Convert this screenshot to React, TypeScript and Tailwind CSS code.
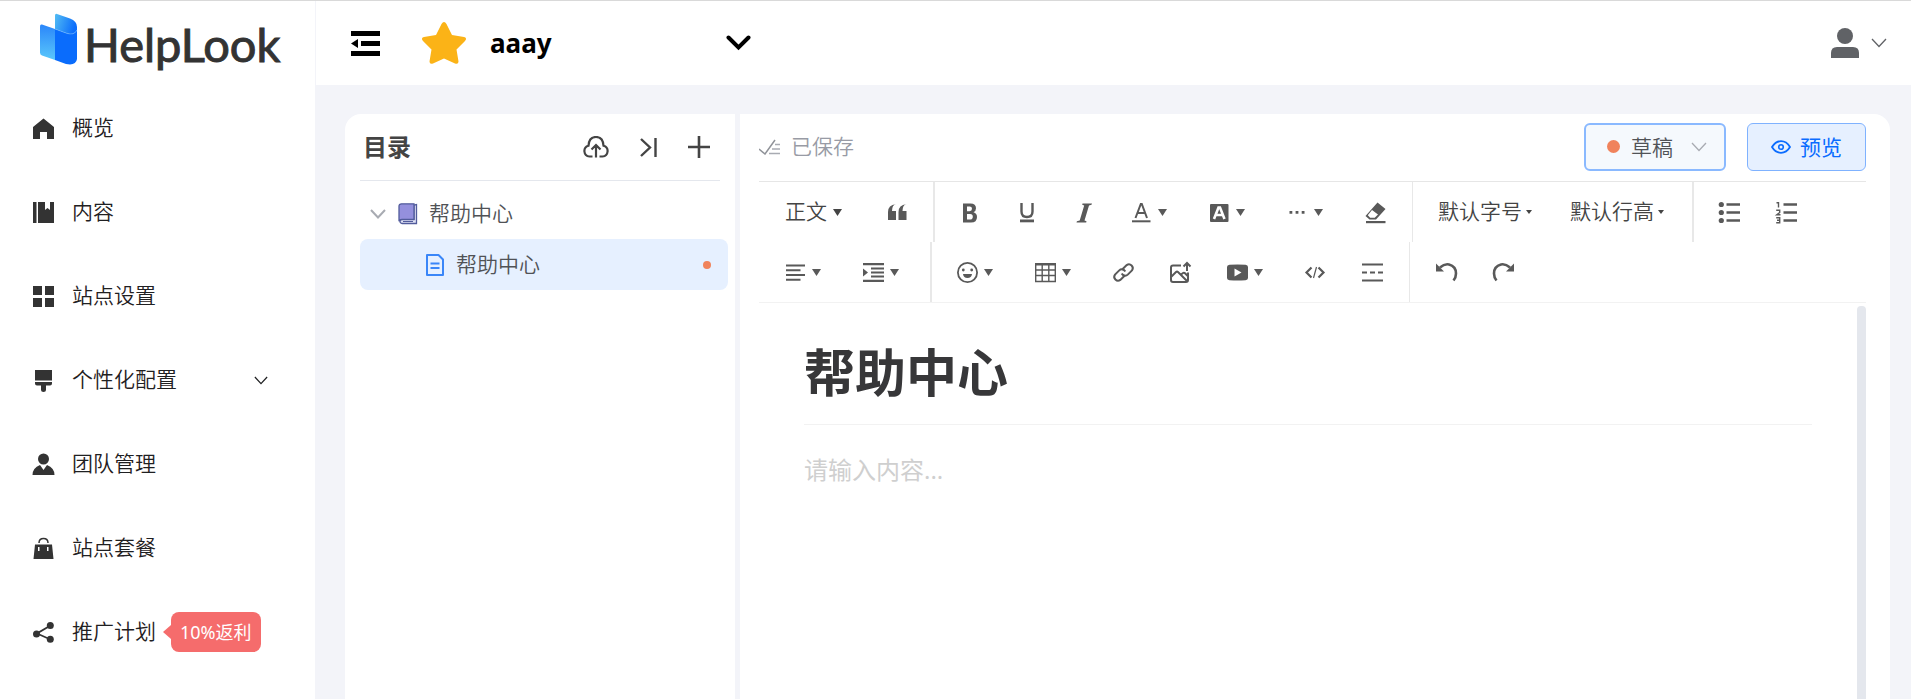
import type { ReactNode } from "react";

const cjk = "font-['Noto_Sans','Noto_Sans_CJK_SC',sans-serif]";

function Svg({ children, className = "size-[21px]", box = "0 0 21 21" }: { children: ReactNode; className?: string; box?: string }) {
  return (
    <svg viewBox={box} className={`shrink-0 ${className}`} fill="none" stroke="none" aria-hidden="true">
      {children}
    </svg>
  );
}

function Chevron({ className, width = 1 }: { className: string; width?: number }) {
  return (
    <Svg box="0 0 16 10" className={className}>
      <path d="M1 1l7 7.5L15 1" stroke="currentColor" strokeWidth={width} />
    </Svg>
  );
}

function Logo() {
  return (
    <a href="#home" className="flex h-[85px] items-center pl-10 text-[#333]">
      <Svg box="0 0 38 52" className="mb-[10px] h-[52px] w-[38px]">
        <defs>
          <linearGradient id="left" x1="0" y1="0" x2="0" y2="1">
            <stop stopColor="#2b86fa" />
            <stop offset="1" stopColor="#5ac8fb" />
          </linearGradient>
          <linearGradient id="top" x1="0" y1="0" x2="1" y2="0.3">
            <stop stopColor="#53bdf3" />
            <stop offset="1" stopColor="#0d6efb" />
          </linearGradient>
        </defs>
        <path d="M0 13.500q0-2.500 2-1.900L15 16v31L2 42.500Q0 41.800 0 39.500z" fill="url(#left)" />
        <path d="M15 16l11 4q8 3 11-3v29q-1 7-11 5L15 47z" fill="#0a6cfc" />
        <path d="M15 2.500Q15 .4 17 1l13 4.500q7 2.500 7 8.500v3q-3 6-11 3L15 16z" fill="url(#top)" />
        <path d="M15 16l11 4q8 3 11-3" stroke="#6bb5ff" strokeWidth=".6" />
      </Svg>
      <span className="pl-[6px] font-['Lato',sans-serif] text-[47px] leading-[48px] font-normal [-webkit-text-stroke:1px_#333]">HelpLook</span>
    </a>
  );
}

const navItems: { label: string; icon: ReactNode; expandable?: boolean; badge?: string }[] = [
  { label: "概览", icon: <path d="M10.500.5L21 9v12h-7v-7H7v7H0V9z" fill="currentColor" /> },
  { label: "内容", icon: <path d="M0 0h3.500v21H0zM5 0h7v8l2.500-2L17 8V0h4v21H5z" fill="currentColor" /> },
  { label: "站点设置", icon: <path d="M0 0h9v9H0zM12 0h9v9h-9zM0 12h9v9H0zM12 12h9v9h-9z" fill="currentColor" /> },
  {
    label: "个性化配置",
    icon: <path d="M2 0h17v10.500H2zM2 12h17v1.500q0 2-2 2h-4V20q0 2-2.500 2T8 20v-4.500H4q-2 0-2-2z" fill="currentColor" />,
    expandable: true,
  },
  {
    label: "团队管理",
    icon: (
      <>
        <circle cx="10.500" cy="5" r="5.500" fill="currentColor" />
        <path d="M-.5 21q0-7 7.500-10l3.500 5 3.500-5q7.500 3 7.500 10z" fill="currentColor" />
      </>
    ),
  },
  {
    label: "站点套餐",
    icon: (
      <>
        <path d="M6 5q0-4.500 4.500-4.500T15 5" stroke="currentColor" strokeWidth="1.500" />
        <path d="M2 6.500h17L20.500 21H.5zM5 9v4h1.500V9zm9 0v4h1.500V9z" fill="currentColor" fillRule="evenodd" />
      </>
    ),
  },
  {
    label: "推广计划",
    icon: (
      <>
        <path d="M17.500 3.500L4 11.500l13.500 6" stroke="currentColor" strokeWidth="1.800" />
        <circle cx="17.300" cy="3.500" r="3.500" fill="currentColor" />
        <circle cx="3.500" cy="12" r="3.500" fill="currentColor" />
        <circle cx="17.300" cy="17.300" r="3.500" fill="currentColor" />
      </>
    ),
    badge: "10%返利",
  },
];

function Sidebar() {
  return (
    <aside className="w-[315px] shrink-0 bg-white">
      <Logo />
      <nav>
        {navItems.map((item) => (
          <a key={item.label} href="#nav" className="flex h-[84px] items-center pr-[47px] pl-[33px] text-[21px] text-[#1f2022]">
            <Svg className="size-[21px] overflow-visible text-[#333]">{item.icon}</Svg>
            <span className="ml-[18px]">{item.label}</span>
            {item.expandable && <Chevron className="ml-auto h-[9px] w-[14px]" width={1.4} />}
            {item.badge && (
              <span className="ml-[7px] flex items-center font-normal text-white">
                <span className="border-y-[7px] border-r-8 border-y-transparent border-r-[#f56c6c]" />
                <span className="flex h-10 items-center rounded-lg bg-[#f56c6c] px-[9px] text-lg">{item.badge}</span>
              </span>
            )}
          </a>
        ))}
      </nav>
    </aside>
  );
}

function Header() {
  return (
    <header className="flex h-[84px] items-center border-l border-[#f3f4f9] bg-white pr-6 pl-[35px]">
      <button type="button" aria-label="收起菜单">
        <Svg box="0 0 29 25" className="h-[25px] w-[29px]">
          <path d="M0 0h29v5H0zM10 10h19v5H10zM0 20h29v5H0zM7 8v9l-7-4.500z" fill="#000" />
        </Svg>
      </button>
      <button type="button" className="ml-[42px] flex w-[329px] items-center">
        <Svg box="0 0 44 42" className="h-[42px] w-11">
          <path
            d="M19.500 2q2.500-4 5 0l5.500 11 12 2q3.500 1 1 4l-8.500 8.500 2 12q0 3-3.500 2L22 36.500 11 41.500q-3.500 1-3.500-2l2-12L1 19q-2.500-3 1-4l12-2z"
            fill="#fbb317"
          />
        </Svg>
        <span className="ml-6 text-[26px] font-bold text-black">aaay</span>
        <Svg box="0 0 25 16" className="ml-auto h-4 w-[25px]">
          <path d="M2.500 2.500l10 10 10-10" stroke="#000" strokeWidth="4" strokeLinecap="round" />
        </Svg>
      </button>
      <button type="button" aria-label="账户" className="ml-auto flex items-center gap-3 text-[#606266]">
        <Svg box="0 0 28 30" className="h-[30px] w-7">
          <circle cx="14" cy="8" r="8" fill="currentColor" />
          <path d="M0 30v-5q0-6 6-6h16q6 0 6 6v5z" fill="currentColor" />
        </Svg>
        <Chevron className="h-[10px] w-4" width={1.3} />
      </button>
    </header>
  );
}

function Catalog() {
  return (
    <section className="w-[390px] shrink-0 rounded-tl-2xl bg-white pr-[7px] pl-[15px]">
      <div className="mr-2 flex h-[67px] items-center border-b border-[#e4e7ed] pr-[10px] pl-[3px] text-[#444]">
        <h2 className="text-2xl font-bold">目录</h2>
        <div className="ml-auto flex items-center gap-[31px]">
          <button type="button" aria-label="上传">
            <Svg box="0 0 26 22" className="h-[22px] w-[26px]">
              <path
                d="M9.500 20.500H6.500a5.500 5.500 0 0 1-1-10.800Q6 1 13 1t7.500 8.700a5.500 5.500 0 0 1-1 10.800h-3M13 21.500V9.500M8.500 13.500L13 9l4.500 4.500"
                stroke="currentColor"
                strokeWidth="2.200"
              />
            </Svg>
          </button>
          <button type="button" aria-label="折叠">
            <Svg box="0 0 17 19" className="h-[19px] w-[17px]">
              <path d="M1 1l9 8.500L1 18M15.500 0v19" stroke="currentColor" strokeWidth="2.400" />
            </Svg>
          </button>
          <button type="button" aria-label="新建">
            <Svg box="0 0 22 22" className="size-[22px]">
              <path d="M11 0v22M0 11h22" stroke="currentColor" strokeWidth="2.600" />
            </Svg>
          </button>
        </div>
      </div>
      <ul className="text-[21px] text-[#505256]">
        <li className="flex h-[58px] items-center pt-2 pl-[10px]">
          <Chevron className="h-[10px] w-4 text-[#a8abb2]" width={2} />
          <Svg box="0 0 20 22" className="ml-3 h-[22px] w-5">
            <path d="M4 16.500h12V2l2.500-.5v19H4a2 2 0 0 1 0-4z" fill="#dfe1f5" stroke="#525c9c" strokeWidth="1.300" />
            <path d="M3.500.8H16v15.500H4q-2.500 0-3 2V3.300Q1 .8 3.500.8z" fill="#9490dd" stroke="#525c9c" strokeWidth="1.300" />
            <path d="M5 18.500h10" stroke="#525c9c" strokeWidth="1" />
          </Svg>
          <span className="ml-[11px]">帮助中心</span>
        </li>
        <li className="flex h-[51px] items-center rounded-lg bg-[#e6f0ff] pr-[17px] pl-[66px]">
          <Svg box="0 0 18 22" className="h-[22px] w-[18px]">
            <path d="M1 1h11.500L17 5.500V21H1zM4.500 9.500h9M4.500 14h9" stroke="#3a86f8" strokeWidth="2" strokeLinejoin="round" />
          </Svg>
          <span className="ml-3">帮助中心</span>
          <span className="ml-auto size-2 rounded-full bg-[#f0835c]" />
        </li>
      </ul>
    </section>
  );
}

function Tool({ label, caret, children }: { label: string; caret?: boolean; children: ReactNode }) {
  return (
    <button type="button" aria-label={label} className={`flex h-[60px] items-center gap-[6px] pl-[18px] ${caret ? "w-[78px]" : "w-[57px]"}`}>
      <Svg className="size-[21px] overflow-visible">{children}</Svg>
      {caret && <Caret />}
    </button>
  );
}

function Caret() {
  return (
    <Svg box="0 0 9 7" className="h-[7px] w-[9px]">
      <path d="M0 0h9L4.500 7z" fill="currentColor" />
    </Svg>
  );
}

function TextTool({ label }: { label: string }) {
  return (
    <button type="button" className="flex h-[60px] w-[132px] items-center gap-1 pl-[18px] text-[21px] whitespace-nowrap text-[#444]">
      {label}
      <Svg box="0 0 6 4" className="h-1 w-[6px]">
        <path d="M0 0h6L3 4z" fill="currentColor" />
      </Svg>
    </button>
  );
}

function Toolbar() {
  return (
    <div className="flex flex-wrap border-y border-t-[#e6e6e6] border-b-[#f2f2f2] text-[#595959]">
      <div className="flex border-r-2 border-[#e8e8e8] pr-[7px] pl-2">
        <button type="button" className="flex h-[60px] w-[102px] items-center gap-[6px] pl-[18px] text-[21px] text-[#444]">
          正文
          <Caret />
        </button>
        <Tool label="引用">
          <path d="M9 2Q5 3 5 9h4v9H1v-8Q1 3 9 2zM19.500 2q-4 1-4 7h4v9h-8v-8q0-7 8-8z" fill="currentColor" />
        </Tool>
      </div>
      <div className="flex border-r border-[#e8e8e8] pr-2 pl-[7px]">
        <Tool label="加粗">
          <path
            d="M3 1.500h7.500q5.500 0 5.500 4.800 0 3-2.500 4 3.500 1 3.500 4.700 0 5.500-6 5.500H3zM7 4.500v4.700h2.500q2.500 0 2.500-2.400T9.500 4.500zm0 7.500v5.500h3q2.800 0 2.800-2.800T10 12z"
            fill="currentColor"
            fillRule="evenodd"
          />
        </Tool>
        <Tool label="下划线">
          <path d="M4.500 1v8.500q0 5.500 5.500 5.500t5.500-5.500V1" stroke="currentColor" strokeWidth="2.400" />
          <path d="M3 17.500h14v2.800H3z" fill="currentColor" />
        </Tool>
        <Tool label="斜体">
          <path d="M8.500 1.500H18l-.5 1.200-2.500.8-4.500 15 2 .8-.3 1.200H2.500l.4-1.200 2.800-.8 4.500-15-2-.8z" fill="currentColor" />
        </Tool>
        <Tool label="字体颜色" caret>
          <path d="M4.500 16L9.800 2h1L16 16M6.500 11h7.500" stroke="currentColor" strokeWidth="2" />
          <path d="M1 18.300h18.500v2H1z" fill="currentColor" />
        </Tool>
        <Tool label="背景颜色" caret>
          <rect x="1" y="2" width="18.500" height="18" rx="1" fill="currentColor" />
          <path d="M5 17L9.500 5.500h1.500L15.500 17M7 13h6.500" stroke="#fff" strokeWidth="2.600" />
        </Tool>
        <Tool label="更多样式" caret>
          <path d="M2.500 9h2.800v2.800H2.500zM8.600 9h2.800v2.800H8.600zM14.700 9h2.800v2.800h-2.800z" fill="currentColor" />
        </Tool>
        <Tool label="清除格式">
          <path d="M12.500.5l8 6.500-9.500 10.500H4.500L.5 14zM7 8L2.800 13.300l2.400 2.400h4.500l3.300-3.200z" fill="currentColor" fillRule="evenodd" />
          <path d="M1 19h19.500v2.200H1z" fill="currentColor" />
        </Tool>
      </div>
      <div className="flex border-r-2 border-[#e8e8e8] pr-2 pl-[7px]">
        <TextTool label="默认字号" />
        <TextTool label="默认行高" />
      </div>
      <div className="flex pr-2 pl-[7px]">
        <Tool label="无序列表">
          <circle cx="2.300" cy="2.500" r="2.600" fill="currentColor" />
          <circle cx="2.300" cy="10.500" r="2.600" fill="currentColor" />
          <circle cx="2.300" cy="18.500" r="2.600" fill="currentColor" />
          <path d="M7.500 2.500H21M7.500 10.500H21M7.500 18.500H21" stroke="currentColor" strokeWidth="2.600" />
        </Tool>
        <Tool label="有序列表">
          <path d="M7.500 2.500H21M7.500 10.500H21M7.500 18.500H21" stroke="currentColor" strokeWidth="2.600" />
          <path d="M.5.800h2v4.700M.2 8.200h3.500v2.300L.8 12.700h3.700M.2 15.800h3.500v5H.2M1 18.200h2.700" stroke="currentColor" strokeWidth="1.400" />
        </Tool>
      </div>
      <div className="flex border-r-2 border-[#e8e8e8] pr-[7px] pl-2">
        <Tool label="对齐" caret>
          <path d="M1 3.500h19M1 8.300h14.500M1 13h19M1 17.800h14.500" stroke="currentColor" strokeWidth="2" />
        </Tool>
        <Tool label="缩进" caret>
          <path d="M0 2.200h21M8 6.500h13M8 10.500h13M8 14.500h13M0 18.800h21" stroke="currentColor" strokeWidth="2.200" />
          <path d="M0 6.500v8l5-4z" fill="currentColor" />
        </Tool>
      </div>
      <div className="flex border-r border-[#e8e8e8] pr-2 pl-[7px]">
        <Tool label="表情" caret>
          <circle cx="10.500" cy="10.500" r="9.600" stroke="currentColor" strokeWidth="1.800" />
          <circle cx="6.300" cy="8" r="1.400" fill="currentColor" />
          <circle cx="14.700" cy="8" r="1.400" fill="currentColor" />
          <path d="M6 12h9q-.5 4-4.500 4T6 12z" fill="currentColor" />
        </Tool>
        <Tool label="表格" caret>
          <path d="M.7 2h19.600v17.500H.7zM.7 8h19.600M.7 13.500h19.600M7.200 3v16.500M13.800 3v16.500" stroke="currentColor" strokeWidth="1.400" />
          <path d="M0 1h21v2.500H0z" fill="currentColor" />
        </Tool>
        <Tool label="链接">
          <g transform="rotate(-45 10.500 10.500)" stroke="currentColor" strokeWidth="2">
            <path d="M9 13.500H3A3.800 3.800 0 0 1 3 6h6a3.800 3.800 0 0 1 3.500 5" />
            <path d="M12 7.500h6a3.800 3.800 0 0 1 0 7.500h-6a3.800 3.800 0 0 1-3.500-5" />
          </g>
        </Tool>
        <Tool label="图片">
          <path d="M11 3.500H3q-2 0-2 2V18q0 2 2 2h13q2 0 2-2v-7.500M1 15l5-5q1-.8 2 0l9 9M10.500 13l2.500-2q1-.7 2 .3l3 3" stroke="currentColor" strokeWidth="2" />
          <path d="M17 9V1.500M13.500 4.500L17 1l3.500 3.500" stroke="currentColor" strokeWidth="2" />
        </Tool>
        <Tool label="视频" caret>
          <path d="M2.500 2.800q8-.8 16 0Q21 3 21 5v11q0 2-2.500 2.300-8 .6-16 0Q0 18 0 16V5q0-2 2.500-2.200zM7.500 6.500v8l7-4z" fill="currentColor" fillRule="evenodd" />
        </Tool>
        <Tool label="代码">
          <path d="M6.500 5.500l-5 5 5 5M13.500 5.500l5 5-5 5" stroke="currentColor" strokeWidth="2.200" />
          <path d="M11.500 5l-3 11" stroke="currentColor" strokeWidth="1.200" />
        </Tool>
        <Tool label="分割线">
          <path d="M0 2.500h21M0 18.500h21M0 10.500h5M8 10.500h5M16 10.500h5" stroke="currentColor" strokeWidth="2" />
        </Tool>
      </div>
      <div className="flex pr-[7px] pl-2">
        <Tool label="撤销">
          <path d="M4 5.500Q8.500 1.500 13 2.500q7 1.800 7 9 0 4-2.500 7" stroke="currentColor" strokeWidth="2.600" />
          <path d="M0 1.500v8h8z" fill="currentColor" />
        </Tool>
        <Tool label="重做">
          <path d="M17 5.500Q12.500 1.500 8 2.500q-7 1.800-7 9 0 4 2.500 7" stroke="currentColor" strokeWidth="2.600" />
          <path d="M21 1.500v8h-8z" fill="currentColor" />
        </Tool>
      </div>
    </div>
  );
}

function Editor() {
  return (
    <section className="flex min-w-0 flex-1 flex-col rounded-tr-2xl bg-white pr-6 pl-[19px]">
      <div className="flex h-[67px] items-center pb-[2px] text-[21px]">
        <Svg box="0 0 22 16" className="h-4 w-[22px] text-[#909399]">
          <path d="M0 10l6 5L16 1" stroke="currentColor" strokeWidth="1.500" />
          <path d="M16 5.500h5M13 10h8M10 14.500h11" stroke="#a8abb2" strokeWidth="1.500" />
        </Svg>
        <span className="ml-[10px] text-[#989ba5]">已保存</span>
        <button
          type="button"
          className="ml-auto flex h-12 w-[142px] items-center rounded-md border-2 border-[#8ab9ff] bg-[#f5f9fd] pr-[17px] pl-[21px] text-[#505256]"
        >
          <span className="size-[13px] rounded-full bg-[#f0835c]" />
          <span className="ml-[11px] pt-[2px]">草稿</span>
          <Chevron className="ml-auto h-[10px] w-4 text-[#a8abb2]" width={1.3} />
        </button>
        <button type="button" className="ml-[21px] flex h-12 w-[119px] items-center rounded-md border border-[#7fb2ff] bg-[#e6f0ff] pl-[23px] font-normal text-[#0a6cff]">
          <Svg box="0 0 20 14" className="h-[14px] w-5">
            <path d="M1 7q3.500-5.800 9-5.800T19 7q-3.500 5.800-9 5.800T1 7z" stroke="currentColor" strokeWidth="1.800" />
            <circle cx="10" cy="7" r="2.300" stroke="currentColor" strokeWidth="1.600" />
          </Svg>
          <span className="ml-[9px] pt-[2px]">预览</span>
        </button>
      </div>
      <Toolbar />
      <div className="mt-[3px] flex flex-1">
        <div className="flex-1 px-[45px]">
          <h1 className="border-b border-[#f2f2f2] pt-7 pb-[14px] text-[51px] leading-[76px] font-bold text-[#373739]">帮助中心</h1>
          <p className="pt-[29px] text-2xl font-normal text-[#cfcfcf]">请输入内容...</p>
        </div>
        <div className="w-[9px] rounded-t bg-[#e4e7ed]" />
      </div>
    </section>
  );
}

export default function App() {
  return (
    <div className={`flex min-h-screen border-t border-[#d9d9d9] bg-[#f3f4f9] leading-normal font-[350] ${cjk}`}>
      <Sidebar />
      <div className="flex min-w-0 flex-1 flex-col">
        <Header />
        <main className="mt-[29px] mr-[21px] ml-[30px] flex flex-1 gap-[5px]">
          <Catalog />
          <Editor />
        </main>
      </div>
    </div>
  );
}
